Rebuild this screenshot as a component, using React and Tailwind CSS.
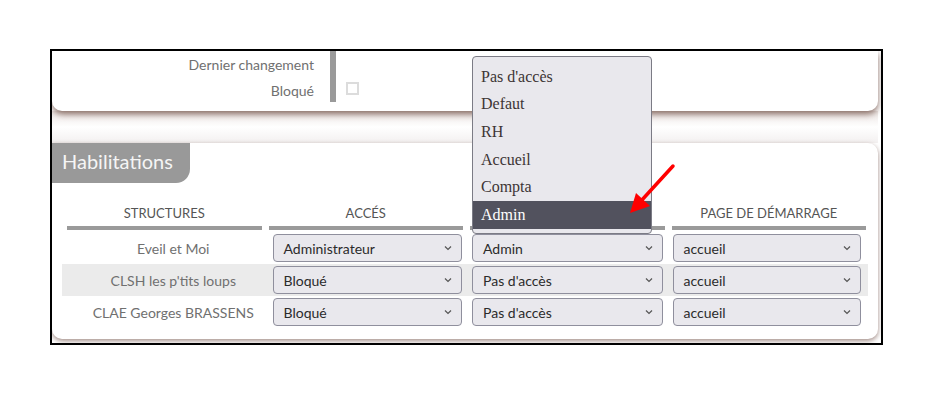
import { useState } from 'react'

const rows = [
  { name: 'Eveil et Moi', acces: 'Administrateur', profil: 'Admin', page: 'accueil' },
  { name: "CLSH les p'tits loups", acces: 'Bloqué', profil: "Pas d'accès", page: 'accueil' },
  { name: 'CLAE Georges BRASSENS', acces: 'Bloqué', profil: "Pas d'accès", page: 'accueil' },
]

const options = ["Pas d'accès", 'Defaut', 'RH', 'Accueil', 'Compta', 'Admin']

function Select({ value }) {
  return (
    <div className="h-[28px] w-full bg-[#e9e8ed] border border-[#8f8f9d] rounded-[4px] flex items-center justify-between pl-[10px] pr-[8px] text-[14px] text-[#2b2b2b]">
      <span>{value}</span>
      <svg width="10" height="10" viewBox="0 0 10 10" fill="none">
        <path d="M2 3.5 L5 6.5 L8 3.5" stroke="#555" strokeWidth="1.2" />
      </svg>
    </div>
  )
}

export default function App() {
  const [selected] = useState('Admin')

  return (
    <div className="relative w-[933px] h-[395px] bg-white font-['Lato',sans-serif]">
      <div className="absolute left-[50px] top-[49px] w-[833px] h-[296px] border-2 border-black overflow-hidden bg-white">
        <div className="flex flex-col pr-[3px]">
          {/* top panel */}
          <div className="h-[60px] bg-white rounded-b-[10px] shadow-[0_3px_6px_rgba(100,65,55,0.75)] flex relative z-10">
            <div className="w-[262px] flex flex-col items-end pt-[1px] text-[14px] text-[#707070] leading-[26px]">
              <span>Dernier changement</span>
              <span>Bloqué</span>
            </div>
            <div className="ml-[16px] w-[6px] h-[51px] bg-[#9a9a9a]" />
            <div className="flex flex-col pl-[10px] pt-[31px]">
              <div className="w-[13px] h-[13px] border-2 border-[#dcdcdc] bg-white" />
            </div>
          </div>

          <div className="h-[32px] bg-gradient-to-b from-[#ece6e4] via-white to-[#f3f0f0]" />

          {/* habilitations panel */}
          <div className="h-[196px] bg-white rounded-tr-[10px] rounded-b-[10px] shadow-[0_2px_5px_rgba(100,65,55,0.6)]">
            <div className="w-[138px] h-[40px] bg-[#999999] rounded-br-[14px] flex items-center pl-[10px] pb-[5px] text-[20px] text-[#f5f5f5]">
              Habilitations
            </div>
            <div className="px-[10px] mt-[22px]">
              <div className="grid grid-cols-4 gap-x-[7px] pl-[5px] pr-[2px]">
                {['STRUCTURES', 'ACCÉS', 'PROFIL', 'PAGE DE DÉMARRAGE'].map((h) => (
                  <div key={h} className="flex flex-col items-center">
                    <span className="text-[13px] leading-[16px] text-[#555]">{h}</span>
                    <div className="mt-[5px] w-full h-[4px] bg-[#9a9a9a]" />
                  </div>
                ))}
              </div>
              <div className="mt-[2px] flex flex-col">
                {rows.map((r, i) => (
                  <div
                    key={r.name}
                    className={`grid grid-cols-4 gap-x-[7px] pl-[5px] pr-[2px] h-[32px] items-center ${i === 1 ? 'bg-[#ebebeb]' : ''}`}
                  >
                    <div className="text-center pl-[18px] text-[14px] text-[#707070]">{r.name}</div>
                    <div className="pl-[4px] pr-[1px]"><Select value={r.acces} /></div>
                    <div className="pl-[2px] pr-[2px]"><Select value={r.profil} /></div>
                    <div className="pl-[1px] pr-[5px]"><Select value={r.page} /></div>
                  </div>
                ))}
              </div>
            </div>
          </div>
        </div>
      </div>

      {/* open dropdown */}
      <div className="absolute z-20 left-[472px] top-[56px] w-[180px] h-[178px] bg-[#e9e8ed] border border-[#7b7b85] rounded-[4px] overflow-hidden font-['Liberation_Serif',serif] text-[16px] text-[#3d3535] pt-[6px]">
        {options.map((o) => (
          <div
            key={o}
            className={`h-[27.6px] flex items-center pl-[8px] ${o === selected ? 'bg-[#52525e] text-white' : ''}`}
          >
            {o}
          </div>
        ))}
      </div>

      {/* red arrow */}
      <svg className="absolute z-30 left-0 top-0" width="933" height="395">
        <line x1="673" y1="166" x2="641" y2="201" stroke="#ff0000" strokeWidth="3.5" strokeLinecap="round" />
        <polygon points="630,213 636,193 650,206" fill="#ff0000" />
      </svg>
    </div>
  )
}
